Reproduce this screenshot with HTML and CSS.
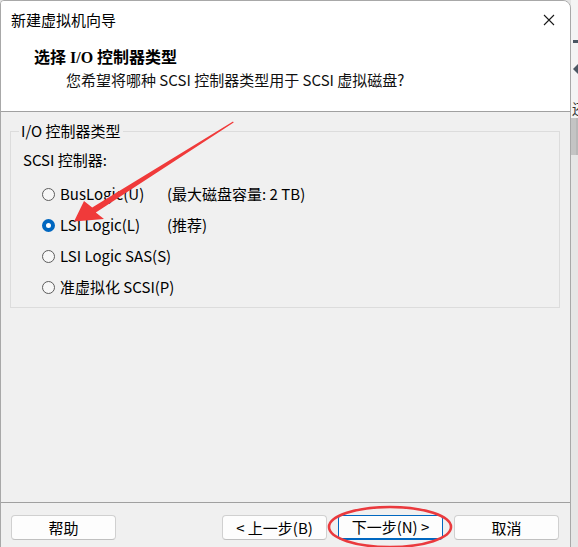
FILE: index.html
```html
<!DOCTYPE html>
<html lang="zh-CN">
<head>
    <meta charset="UTF-8">
    <title>新建虚拟机向导</title>
    <link rel="stylesheet" href="styles.css">
</head>
<body>
    <div class="window">
        <div class="titlebar">
            <span class="title">新建虚拟机向导</span>
            <span class="close">
                <svg width="12" height="12" viewBox="0 0 12 12"><path d="M1 1L11 11M11 1L1 11" stroke="#1a1a1a" stroke-width="1.1"/></svg>
            </span>
        </div>
        <div class="header">
            <h1>选择 I/O 控制器类型</h1>
            <p>您希望将哪种 SCSI 控制器类型用于 SCSI 虚拟磁盘?</p>
        </div>

        <div class="content">
            <fieldset class="group">
                <legend>I/O 控制器类型</legend>
                <div class="caption">SCSI 控制器:</div>
                <div class="options">
                    <label class="option"><span class="radio"></span>BusLogic(U)</label>
                    <span class="note">(最大磁盘容量: 2 TB)</span>
                    <label class="option"><span class="radio checked"></span>LSI Logic(L)</label>
                    <span class="note">(推荐)</span>
                    <label class="option wide"><span class="radio"></span>LSI Logic SAS(S)</label>
                    <label class="option wide"><span class="radio"></span>准虚拟化 SCSI(P)</label>
                </div>
            </fieldset>
        </div>

        <div class="footer">
            <button class="btn">帮助</button>
            <div class="nav">
                <button class="btn">&lt; 上一步(B)</button>
                <button class="btn focused">下一步(N) &gt;</button>
                <button class="btn">取消</button>
            </div>
        </div>

        <!-- annotations drawn over the dialog -->
        <svg class="mark" width="570" height="547" viewBox="0 0 570 547">
            <polygon points="233,121.4 233.7,122.5 95.8,212.4 104,219 74,221.5 84,201 92.2,207.6" fill="#f03a3a"/>
            <ellipse cx="390" cy="527" rx="61" ry="20" fill="none" stroke="#ea3a3e" stroke-width="2.6"/>
        </svg>
    </div>

    <div class="desktop">
        <div class="dash"></div>
        <div class="tri"></div>
        <div class="glyph">还</div>
        <div class="thumb"></div>
    </div>
</body>
</html>
```

FILE: styles.css
```css
* {
    margin: 0;
    padding: 0;
    box-sizing: border-box;
}

body {
    display: flex;
    width: 578px;
    height: 547px;
    overflow: hidden;
    background: #e4e4e4;
    font-family: "Noto Sans CJK SC", sans-serif;
    font-size: 15px;
    color: #000;
}

/* Dialog window */
.window {
    position: relative;
    width: 571px;
    height: 549px;
    flex-shrink: 0;
    background: #f0f0f0;
    border: 1px solid #a8a8a8;
    border-top-right-radius: 8px;
    border-top-left-radius: 4px;
    overflow: hidden;
}

.titlebar {
    height: 40px;
    background: #fff;
    display: flex;
    align-items: center;
    justify-content: space-between;
    padding: 0 14px 2px 10px;
}

.title {
    font-size: 15px;
    line-height: 20px;
    color: #000;
}

.close {
    display: flex;
    width: 14px;
    justify-content: center;
}

.header {
    height: 71px;
    background: #fff;
    border-bottom: 1px solid #a0a0a0;
    padding: 8px 0 0 33px;
}

.header h1 {
    font-family: "Liberation Serif", "Noto Sans CJK SC", serif;
    font-size: 16px;
    font-weight: bold;
    line-height: 18px;
}

.header p {
    margin: 4px 0 0 32px;
    font-size: 15px;
    line-height: 18px;
    color: #111;
}

/* Group box */
.content {
    padding: 10px 10px 0 9px;
    height: 391px;
    border-bottom: 1px solid #a0a0a0;
}

.group {
    border: 1px solid #dcdcdc;
    padding: 11px 10px 9px 12px;
    height: 186px;
}

.group legend {
    margin-left: -4px;
    padding: 0 2px;
    line-height: 18px;
}

.caption {
    line-height: 18px;
}

.options {
    display: grid;
    grid-template-columns: 125px auto;
    row-gap: 13px;
    margin: 16px 0 0 19px;
    line-height: 18px;
}

.option {
    display: flex;
    align-items: center;
    gap: 5px;
    white-space: nowrap;
}

.option.wide {
    grid-column: 1 / span 2;
}

.note {
    white-space: nowrap;
}

.radio {
    width: 13px;
    height: 13px;
    border-radius: 50%;
    border: 1px solid #5c5c5c;
    background: #f7f7f7;
    flex-shrink: 0;
}

.radio.checked {
    border: 4px solid #0067c0;
    background: #fff;
}

/* Buttons */
.footer {
    display: flex;
    justify-content: space-between;
    padding: 12px 11px 0 10px;
}

.nav {
    display: flex;
    gap: 11px;
}

.btn {
    width: 105px;
    height: 25px;
    background: #fdfdfd;
    border: 1px solid #d0d0d0;
    border-bottom-color: #c0c0c0;
    border-radius: 4px;
    font-family: "Noto Sans CJK SC", sans-serif;
    font-size: 15px;
    line-height: 18px;
    color: #000;
}

.btn.focused {
    border: 1px solid #0067c0;
    border-bottom-width: 2px;
}

.mark {
    position: absolute;
    left: -1px;
    top: -1px;
    pointer-events: none;
}

/* Desktop behind the dialog */
.desktop {
    position: relative;
    flex: 1;
    background: linear-gradient(#f4f4f4 0, #f4f4f4 118px, #c4c4c4 118px, #c4c4c4 155px, #e6e6e6 155px);
    overflow: hidden;
}

.dash {
    position: absolute;
    left: 2px;
    top: 40px;
    width: 6px;
    height: 3px;
    background: #4b5763;
}

.tri {
    position: absolute;
    left: 2px;
    top: 63px;
    border-right: 6px solid #4b5763;
    border-top: 6px solid transparent;
    border-bottom: 6px solid transparent;
}

.glyph {
    position: absolute;
    left: 1px;
    top: 100px;
    font-size: 14px;
    line-height: 16px;
    color: #333;
}

.thumb {
    position: absolute;
    right: 0;
    top: 118px;
    width: 2px;
    height: 37px;
    background: #b8b8b8;
}
```
